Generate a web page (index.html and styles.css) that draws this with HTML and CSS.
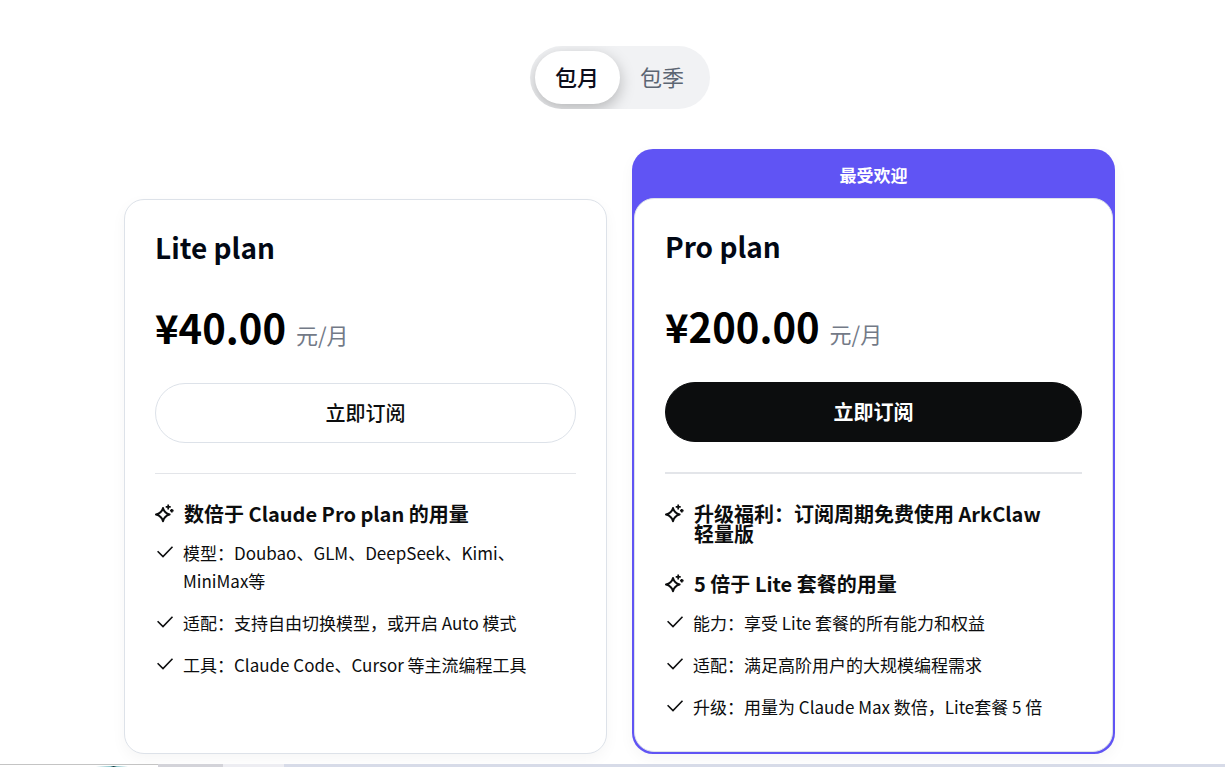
FILE: index.html
```html
<!DOCTYPE html>
<html lang="zh-CN">
<head>
<meta charset="utf-8">
<meta name="viewport" content="width=device-width, initial-scale=1">
<title>套餐订阅</title>
<link rel="stylesheet" href="styles.css">
</head>
<body>
<svg class="sprite" aria-hidden="true">
  <symbol id="sparkle" viewBox="0 0 20 20">
    <path stroke-width="2" stroke-linejoin="round" d="M8 4C9 7.800 10.600 9.400 14.600 10.500C10.600 11.600 9 13.200 8 17.200C7 13.200 5.400 11.600 1 10.500C5.400 9.400 7 7.800 8 4Z"/>
    <path stroke-width="1.700" d="M13.200 .4V5.400M10.700 2.900H15.700M16.800 4.900V8.500M15 6.700H18.600"/>
  </symbol>
  <symbol id="check" viewBox="0 0 20 20">
    <path d="M2.600 9.200L8 14.500L17.500 4.800"/>
  </symbol>
</svg>
<main class="pricing">
  <div class="toggle" role="group" aria-label="计费周期">
    <button class="toggle-option toggle-active" type="button" aria-pressed="true">包月</button>
    <button class="toggle-option" type="button" aria-pressed="false">包季</button>
  </div>
  <div class="plans">
    <section class="card lite">
      <h2 class="name">Lite plan</h2>
      <p class="price"><strong class="amount">¥40.00</strong><span class="unit">元/月</span></p>
      <button class="subscribe" type="button">立即订阅</button>
      <hr class="divider">
      <h3 class="feature-title"><svg class="icon sparkle"><use href="#sparkle"/></svg><span>数倍于 Claude Pro plan 的用量</span></h3>
      <ul class="features">
        <li><svg class="icon check"><use href="#check"/></svg><span>模型：Doubao、GLM、DeepSeek、Kimi、MiniMax等</span></li>
        <li><svg class="icon check"><use href="#check"/></svg><span>适配：支持自由切换模型，或开启 Auto 模式</span></li>
        <li><svg class="icon check"><use href="#check"/></svg><span>工具：Claude Code、Cursor 等主流编程工具</span></li>
      </ul>
    </section>
    <div class="popular">
      <p class="badge">最受欢迎</p>
      <section class="card pro">
        <h2 class="name">Pro plan</h2>
        <p class="price"><strong class="amount">¥200.00</strong><span class="unit">元/月</span></p>
        <button class="subscribe subscribe-dark" type="button">立即订阅</button>
        <hr class="divider divider-thick">
        <h3 class="feature-title bonus"><svg class="icon sparkle"><use href="#sparkle"/></svg><span>升级福利：订阅周期免费使用 ArkClaw 轻量版</span></h3>
        <h3 class="feature-title"><svg class="icon sparkle"><use href="#sparkle"/></svg><span>5 倍于 Lite 套餐的用量</span></h3>
        <ul class="features">
          <li><svg class="icon check"><use href="#check"/></svg><span>能力：享受 Lite 套餐的所有能力和权益</span></li>
          <li><svg class="icon check"><use href="#check"/></svg><span>适配：满足高阶用户的大规模编程需求</span></li>
          <li><svg class="icon check"><use href="#check"/></svg><span>升级：用量为 Claude Max 数倍，Lite套餐 5 倍</span></li>
        </ul>
      </section>
    </div>
  </div>
</main>
<footer class="taskbar">
  <div class="task-window"><span class="task-glow"></span></div>
  <div class="task-gray"></div>
  <div class="task-light"></div>
</footer>
</body>
</html>
```
FILE: styles.css
```css
* { box-sizing: border-box; }
body {
  margin: 0;
  min-height: 100vh;
  display: flex;
  flex-direction: column;
  background: #fff;
  color: #0c0d0e;
  font-family: "Noto Sans CJK SC", sans-serif;
}
h2, h3, p, ul { margin: 0; padding: 0; }
button { font: inherit; color: inherit; cursor: pointer; }
.sprite { position: absolute; width: 0; height: 0; }
.pricing {
  flex: 1;
  display: flex;
  flex-direction: column;
  align-items: center;
  padding: 46px 110px 10px 124px;
}
.toggle {
  display: flex;
  padding: 5px;
  border-radius: 32px;
  background: #f1f2f4;
  overflow: hidden;
}
.toggle-option {
  width: 85px;
  height: 53px;
  padding: 0 0 3px;
  border: 0;
  border-radius: 27px;
  background: transparent;
  color: #5c6673;
  font-size: 22px;
}
.toggle-active {
  background: #fff;
  color: #0c0d1a;
  font-weight: 500;
  box-shadow: 0 5px 15px rgba(0, 0, 0, .25);
}
.plans {
  align-self: stretch;
  display: grid;
  grid-template-columns: 1fr 1fr;
  gap: 25px;
  margin-top: 40px;
}
.card {
  padding: 30px;
  border: 1px solid #dde2e9;
  border-radius: 20px;
  background: #fff;
}
.lite { margin-top: 50px; box-shadow: 0 5px 15px rgba(0, 0, 0, .04); }
.popular {
  display: flex;
  flex-direction: column;
  padding: 0 2px 2px;
  border-radius: 21px;
  background: #6054f4;
  box-shadow: 0 5px 15px rgba(0, 0, 0, .04);
}
.badge {
  padding: 14px 0 11px;
  color: #fff;
  font-size: 17px;
  font-weight: 700;
  line-height: 24px;
  text-align: center;
}
.pro { flex: 1; }
.name {
  color: #020814;
  font-size: 28px;
  font-weight: 700;
  line-height: 34px;
}
.price {
  display: flex;
  align-items: baseline;
  gap: 10px;
  margin-top: 37px;
  line-height: 52px;
}
.amount { color: #000; font-size: 40px; font-weight: 700; }
.unit { color: #737a87; font-size: 22px; }
.subscribe {
  width: 100%;
  height: 60px;
  margin-top: 23px;
  padding: 0 0 2px;
  border: 1px solid #dde2e9;
  border-radius: 30px;
  background: #fff;
  font-size: 20px;
  font-weight: 500;
}
.subscribe-dark { border-color: #0c0d0e; background: #0c0d0e; color: #fff; font-weight: 700; }
.divider {
  margin: 30px 0;
  border: 0;
  border-top: 1px solid #e3e5e9;
}
.divider-thick { border-top-width: 2px; }
.feature-title {
  display: flex;
  gap: 9px;
  padding-right: 30px;
  font-size: 20px;
  font-weight: 700;
  line-height: 20px;
}
.bonus { margin-bottom: 30px; }
.icon {
  flex: none;
  width: 20px;
  height: 20px;
  fill: none;
  stroke: #0c0d0e;
}
.check { margin-top: 3px; stroke-width: 1.6; }
.features {
  display: flex;
  flex-direction: column;
  gap: 14px;
  margin-top: 15px;
  list-style: none;
}
.features li {
  display: flex;
  gap: 8px;
  padding-right: 20px;
  font-size: 17px;
  line-height: 28px;
}
.taskbar { display: flex; height: 3px; background: #d7dbe8; }
.task-window {
  display: flex;
  justify-content: center;
  align-items: flex-end;
  width: 158px;
  border-top: 1px solid #c4c4c4;
  background: #fff;
  padding-left: 66px;
}
.task-glow {
  width: 32px;
  height: 1px;
  background: linear-gradient(90deg, #fff, #8cc7cd 45%, #173c40 55%, #8cc7cd 65%, #fff);
}
.task-gray { width: 65px; background: #d3d3d9; }
.task-light { width: 61px; background: #ededf2; }
```
